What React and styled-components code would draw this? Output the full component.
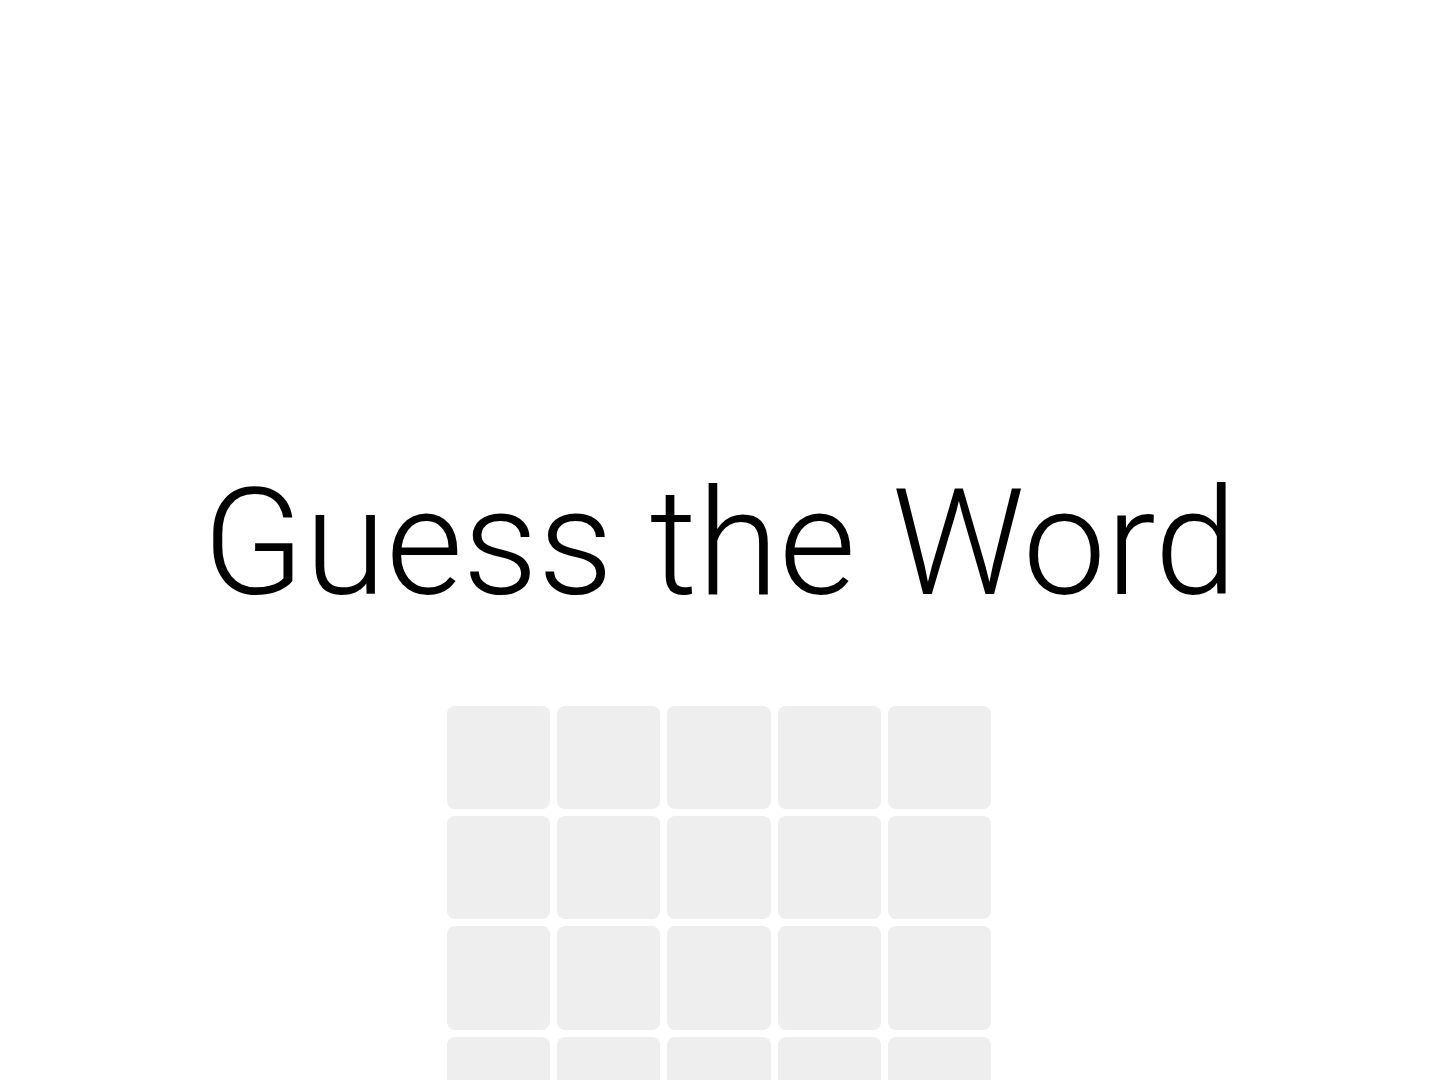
import React from 'react';
import styled, { createGlobalStyle } from 'styled-components';

const GlobalStyle = createGlobalStyle`
  html, body {
    margin: 0;
    padding: 0;
    background: #ffffff;
  }
  body {
    font-family: Roboto, "Liberation Sans", sans-serif;
  }
`;

const Page = styled.main`
  display: flex;
  flex-direction: column;
  align-items: center;
  padding-top: 457px;
  min-height: 100vh;
  box-sizing: border-box;
`;

const Title = styled.h1`
  margin: 0;
  font-family: Roboto, "Liberation Sans", sans-serif;
  font-weight: 300;
  font-size: 148.5px;
  line-height: 173px;
  color: #000;
`;

const Board = styled.div`
  display: grid;
  grid-template-columns: repeat(${({ cols }) => cols}, 103.3px);
  grid-auto-rows: 103.3px;
  gap: 6.9px;
  margin-top: 76px;
  margin-right: 2px;
`;

const Tile = styled.div`
  background: #eeeeee;
  border-radius: 8px;
`;

const ROWS = 6;
const COLS = 5;

const App = () => {
  return (
    <>
      <GlobalStyle />
      <Page>
        <Title>Guess the Word</Title>
        <Board cols={COLS}>
          {Array.from({ length: ROWS * COLS }).map((_, i) => (
            <Tile key={i} />
          ))}
        </Board>
      </Page>
    </>
  );
};

export default App;
